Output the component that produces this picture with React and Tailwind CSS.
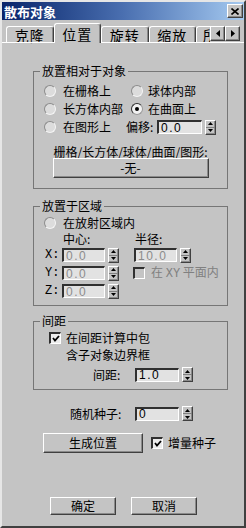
import React from 'react';

const raised =
  'border border-t-white border-l-white border-r-[#404040] border-b-[#404040] shadow-[inset_-1px_-1px_0_#8a8a8a]';
const sunken =
  'border-t-2 border-l-2 border-t-[#303030] border-l-[#303030] border-r border-b border-r-white border-b-white';

function Radio({ on }) {
  return (
    <span
      className={`w-[12px] h-[12px] shrink-0 rounded-full border flex items-center justify-center ${
        on
          ? 'border-t-[#303030] border-l-[#303030] border-r-[#9a9a9a] border-b-[#9a9a9a] bg-[#f2f2f2]'
          : 'border-t-[#8c8c8c] border-l-[#8c8c8c] border-r-[#f4f4f4] border-b-[#f4f4f4] bg-[#dcdcdc]'
      }`}
    >
      {on && <span className="w-[4px] h-[4px] rounded-full bg-black" />}
    </span>
  );
}

function Check({ on, disabled }) {
  return (
    <span
      className={`w-[12px] h-[12px] shrink-0 flex items-center justify-center ${sunken} ${
        disabled ? 'bg-[#c4c4c4]' : 'bg-[#ececec]'
      }`}
    >
      {on && (
        <svg width="8" height="7" viewBox="0 0 8 7">
          <path d="M1 3 L3 5.5 L7 1" fill="none" stroke="#000" strokeWidth="1.8" />
        </svg>
      )}
    </span>
  );
}

function Spin() {
  return (
    <div className={`ml-[3px] w-[11px] h-[15px] shrink-0 flex flex-col bg-[#c4c4c4] ${raised}`}>
      <div className="flex-1 flex items-center justify-center border-b border-b-[#808080]">
        <svg width="5" height="3" viewBox="0 0 5 3">
          <polygon points="2.5,0 5,3 0,3" fill="#000" />
        </svg>
      </div>
      <div className="flex-1 flex items-center justify-center">
        <svg width="5" height="3" viewBox="0 0 5 3">
          <polygon points="0,0 5,0 2.5,3" fill="#000" />
        </svg>
      </div>
    </div>
  );
}

function Field({ value, w = 'w-[44px]', disabled }) {
  return (
    <div
      className={`${w} h-[14px] shrink-0 flex items-center pl-[2px] bg-[#e2e2e2] ${sunken} font-['Liberation_Sans',sans-serif] text-[12px] tracking-[1.5px] ${
        disabled ? 'text-[#8c8c8c]' : 'text-black'
      }`}
    >
      {value}
    </div>
  );
}

function Group({ title, className = '', children }) {
  return (
    <fieldset className={`ml-[31px] w-[195px] border border-[#767676] ${className}`}>
      <legend className="ml-[6px] px-[2px] leading-[14px]">{title}</legend>
      {children}
    </fieldset>
  );
}

function Tab({ label, active }) {
  return (
    <div
      className={`w-[47.5px] shrink-0 flex items-center justify-center rounded-t-[3px] border-l border-t border-r border-l-white border-t-white border-r-[#404040] shadow-[inset_-1px_0_0_#8a8a8a] bg-[#c4c4c4] text-[14px] tracking-[1px] leading-none ${
        active ? 'h-[20px] -mb-px relative z-10' : 'h-[16px]'
      }`}
    >
      {label}
    </div>
  );
}

function Arrow({ dir }) {
  return (
    <div className={`w-[15px] h-[15px] flex items-center justify-center bg-[#c4c4c4] ${raised}`}>
      <svg width="4" height="7" viewBox="0 0 4 7">
        {dir === 'l' ? (
          <polygon points="4,0 4,7 0,3.5" fill="#000" />
        ) : (
          <polygon points="0,0 0,7 4,3.5" fill="#000" />
        )}
      </svg>
    </div>
  );
}

const mono = "font-['Liberation_Mono',monospace]";

export default function App() {
  return (
    <div className="w-[246px] h-[528px] overflow-hidden flex flex-col bg-[#c4c4c4] border-2 border-t-[#e6e6e6] border-l-[#e6e6e6] border-r-[#404040] border-b-[#404040] text-[12px] leading-[14px] text-black font-['Noto_Sans_CJK_SC','Noto_Sans',sans-serif]">
      {/* title bar */}
      <div className="h-[18px] shrink-0 flex items-center justify-between pl-[2px] pr-[1px] bg-linear-to-r from-[#0a246a] via-[#4a6fb0] to-[#a6caf0]">
        <span className="text-white font-bold text-[13px] leading-none">散布对象</span>
        <div className={`w-[16px] h-[14px] flex items-center justify-center bg-[#c4c4c4] ${raised}`}>
          <svg width="8" height="7" viewBox="0 0 8 7">
            <path d="M0.5 0.5 L7.5 6.5 M7.5 0.5 L0.5 6.5" stroke="#000" strokeWidth="1.6" />
          </svg>
        </div>
      </div>

      {/* tabs */}
      <div className="mt-[3px] h-[19px] shrink-0 flex items-end pl-[4px]">
        <Tab label="克隆" />
        <Tab label="位置" active />
        <Tab label="旋转" />
        <Tab label="缩放" />
        <div className="w-[14px] h-[16px] overflow-hidden rounded-tl-[3px] border-l border-t border-l-white border-t-white pl-[6px] pt-[1px] text-[14px] leading-none whitespace-nowrap">
          所有
        </div>
        <div className="self-start mt-[3px] flex">
          <Arrow dir="l" />
          <Arrow dir="r" />
        </div>
      </div>

      {/* page */}
      <div className="flex-1 flex flex-col border-t border-t-white">
        <Group title="放置相对于对象" className="mt-[21px] pb-[10px]">
          <div className="mt-[4px] pl-[10px] flex flex-col">
            <div className="h-[18px] flex items-center">
              <div className="w-[87px] flex items-center gap-[7px]">
                <Radio />
                <span>在栅格上</span>
              </div>
              <div className="flex items-center gap-[5px]">
                <Radio />
                <span>球体内部</span>
              </div>
            </div>
            <div className="h-[18px] flex items-center">
              <div className="w-[87px] flex items-center gap-[7px]">
                <Radio />
                <span>长方体内部</span>
              </div>
              <div className="flex items-center gap-[5px]">
                <Radio on />
                <span>在曲面上</span>
              </div>
            </div>
            <div className="h-[18px] flex items-center">
              <div className="w-[82px] flex items-center gap-[7px]">
                <Radio />
                <span>在图形上</span>
              </div>
              <span className="w-[31px]">偏移:</span>
              <Field value="0.0" w="w-[45px]" />
              <Spin />
            </div>
          </div>
          <div className="mt-[9px] h-[13px] flex items-center justify-center">栅格/长方体/球体/曲面/图形:</div>
          <div className="flex justify-center">
            <div className={`w-[156px] h-[20px] flex items-center justify-center ${raised}`}>-无-</div>
          </div>
        </Group>

        <Group title="放置于区域" className="mt-[10px] pb-[5px]">
          <div className="mt-[1px] h-[18px] pl-[10px] flex items-center gap-[7px]">
            <Radio />
            <span>在放射区域内</span>
          </div>
          <div className="h-[14px] flex items-center pl-[29px]">
            <span className="w-[72px]">中心:</span>
            <span>半径:</span>
          </div>
          <div className="h-[18px] flex items-center pl-[11px]">
            <span className={`w-[17px] ${mono}`}>X:</span>
            <Field value="0.0" w="w-[43px]" disabled />
            <Spin />
            <div className="ml-[15px] flex items-center">
              <Field value="10.0" w="w-[43px]" disabled />
              <Spin />
            </div>
          </div>
          <div className="h-[18px] flex items-center pl-[11px]">
            <span className={`w-[17px] ${mono}`}>Y:</span>
            <Field value="0.0" w="w-[43px]" disabled />
            <Spin />
            <div className="ml-[14px] flex items-center gap-[6px] text-[#808080]">
              <Check disabled />
              <span>
                在 <span className={mono}>XY</span> 平面内
              </span>
            </div>
          </div>
          <div className="h-[18px] flex items-center pl-[11px]">
            <span className={`w-[17px] ${mono}`}>Z:</span>
            <Field value="0.0" w="w-[43px]" disabled />
            <Spin />
          </div>
        </Group>

        <Group title="间距" className="mt-[8px] pb-[7px]">
          <div className="mt-[3px] h-[14px] pl-[15px] flex items-center gap-[5px]">
            <Check on />
            <span>在间距计算中包</span>
          </div>
          <div className="mt-[3px] h-[14px] pl-[32px] flex items-center">含子对象边界框</div>
          <div className="mt-[5px] h-[15px] pl-[59px] flex items-center">
            <span className="w-[42px]">间距:</span>
            <Field value="1.0" />
            <Spin />
          </div>
        </Group>

        <div className="mt-[16px] h-[15px] pl-[68px] flex items-center">
          <span className="w-[65px]">随机种子:</span>
          <Field value="0" />
          <Spin />
        </div>

        <div className="mt-[12px] h-[20px] pl-[41px] flex items-center">
          <div className={`w-[100px] h-[20px] flex items-center justify-center ${raised}`}>生成位置</div>
          <div className="ml-[8px] flex items-center gap-[5px]">
            <Check on />
            <span>增量种子</span>
          </div>
        </div>

        <div className="mt-[44px] pl-[48px] flex items-center gap-[15px]">
          <div className={`w-[66px] h-[18px] flex items-center justify-center ${raised}`}>确定</div>
          <div className={`w-[66px] h-[18px] flex items-center justify-center ${raised}`}>取消</div>
        </div>
      </div>
    </div>
  );
}
